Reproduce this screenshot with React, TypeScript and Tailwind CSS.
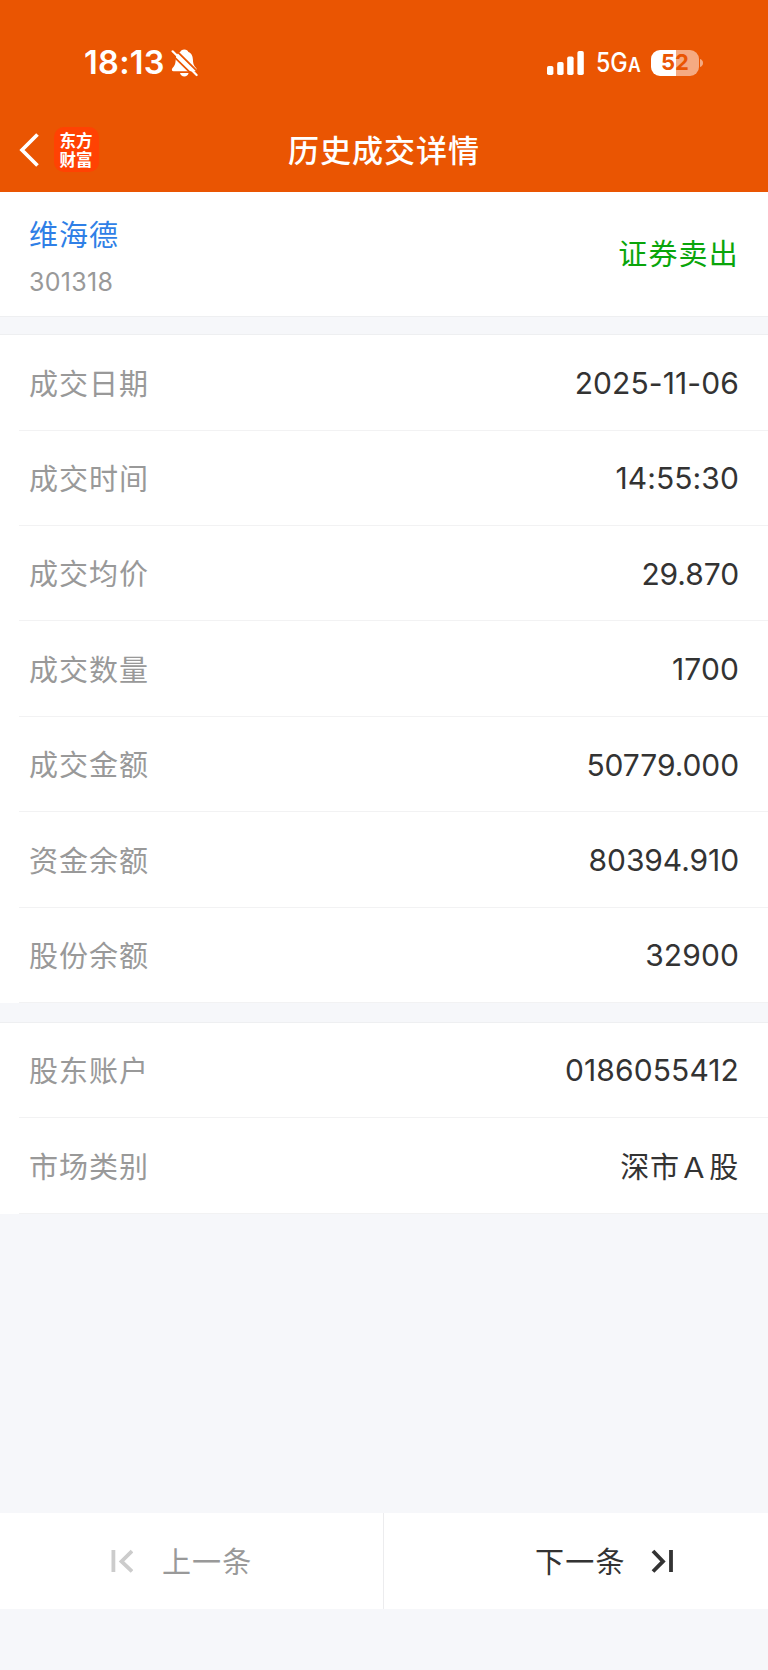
import React from "react";

const LATIN = "font-['Inter','Noto_Sans_CJK_SC',sans-serif]";
const HAN = "font-['Noto_Sans_CJK_SC',sans-serif]";

type Row = { label: string; value: string; han?: boolean };

const tradeRows: Row[] = [
  { label: "成交日期", value: "2025-11-06" },
  { label: "成交时间", value: "14:55:30" },
  { label: "成交均价", value: "29.870" },
  { label: "成交数量", value: "1700" },
  { label: "成交金额", value: "50779.000" },
  { label: "资金余额", value: "80394.910" },
  { label: "股份余额", value: "32900" },
];

const accountRows: Row[] = [
  { label: "股东账户", value: "0186055412" },
  { label: "市场类别", value: "深市Ａ股", han: true },
];

function BellSlash() {
  return (
    <svg className="ml-[5px] h-[28px] w-[27px]" viewBox="0 0 27 28">
      <path
        d="M13.300 .5c-2.200 0-3.600 1.100-4.100 2.400C5.900 4.200 4.900 7 4.700 10.500c-.2 4.300-.9 6-3 8.300C.3 20.300.6 22.300 2.600 22.300H24c2 0 2.300-2 .9-3.500-2.100-2.300-2.800-4-3-8.300-.2-3.500-1.200-6.300-4.500-7.600C16.900 1.600 15.500.5 13.300.5z"
        fill="#fff"
      />
      <path d="M9 24h8.600c-.5 2.100-2.100 3.400-4.300 3.400S9.500 26.100 9 24z" fill="#fff" />
      <path d="M-.5 4.300 24.500 28.800M3.500 -.2 28 24" stroke="#ea5502" strokeWidth="1.800" />
      <path d="M1.600 2.300 25.600 26" stroke="#fff" strokeWidth="2.200" strokeLinecap="round" />
    </svg>
  );
}

function Battery() {
  return (
    <div className="ml-[11px] flex items-center">
      <div className="flex h-[26px] w-[48px] items-center justify-center rounded-[9px] bg-[linear-gradient(90deg,#fff_25px,#f5aa82_25px)]">
        <span className="-mt-px font-['Inter',sans-serif] text-[22px] leading-[26px] font-bold text-[#ea5502]">52</span>
      </div>
      <svg className="ml-[1px] h-[8px] w-[3px]" viewBox="0 0 3 8">
        <path d="M0 0c1.800.6 3 2 3 4S1.800 7.400 0 8z" fill="#f5aa82" />
      </svg>
    </div>
  );
}

function StatusBar() {
  return (
    <div className="flex h-[125px] items-center pl-[84px] text-white">
      <span className="w-[82px] pt-px font-['Inter',sans-serif] text-[32.500px] font-semibold tracking-[0.3px] whitespace-nowrap">18:13</span>
      <BellSlash />
      <div className="ml-auto flex items-center pr-[65px]">
        <svg className="h-[24px] w-[37px]" viewBox="0 0 37 24" fill="#fff">
          <rect x="0" y="15" width="6.400" height="9" rx="1.800" />
          <rect x="10.200" y="11" width="6.400" height="13" rx="1.800" />
          <rect x="20.200" y="5.500" width="6.400" height="18.500" rx="1.800" />
          <rect x="30.400" y="0" width="6.400" height="24" rx="1.800" />
        </svg>
        <span className="ml-[12px] flex w-[44px] items-baseline pt-[2px] font-['Inter',sans-serif] font-medium whitespace-nowrap">
          <span className="inline-block origin-left scale-x-[0.860] text-[27px]">5G</span>
          <span className="-ml-[5px] inline-block origin-left scale-x-[0.900] text-[19.500px] font-semibold">A</span>
        </span>
        <Battery />
      </div>
    </div>
  );
}

function TitleBar() {
  return (
    <div className="grid h-[67px] grid-cols-[1fr_auto_1fr] items-start">
      <div className="flex items-center pl-[19px] pt-[2px]">
        <svg className="h-[34px] w-[20px]" viewBox="0 0 20 34">
          <path d="M18.500 1.500 3 17l15.500 15.500" fill="none" stroke="#fff" strokeWidth="3.700" />
        </svg>
        <div className="ml-[15px] flex h-[45px] w-[45px] items-center justify-center rounded-[10px] bg-[#ff4203]">
          <span className={`${HAN} w-[34px] text-[16.500px] leading-[19px] font-bold break-all text-white`}>东方财富</span>
        </div>
      </div>
      <h1 className={`${HAN} pt-px text-[31px] leading-[46px] font-medium tracking-[1px] text-white`}>历史成交详情</h1>
      <div />
    </div>
  );
}

function DetailList({ rows }: { rows: Row[] }) {
  return (
    <div className="bg-white pl-[19px]">
      {rows.map((row) => (
        <div key={row.label} className="flex h-[95.430px] items-center justify-between border-b border-[#f2f2f3] pr-[29px] pl-[10px]">
          <span className={`${HAN} text-[29px] tracking-[1px] text-[#999]`}>{row.label}</span>
          {row.han ? (
            <span className={`${HAN} text-[29px] tracking-[0.700px] text-[#333]`}>{row.value}</span>
          ) : (
            <span className={`${LATIN} pt-[2px] text-[30px] ${row.value.includes(".") ? "tracking-[-0.080px]" : "tracking-[0.100px]"} text-[#333]`}>{row.value}</span>
          )}
        </div>
      ))}
    </div>
  );
}

export default function App() {
  return (
    <div className="flex h-[1670px] w-[768px] flex-col overflow-hidden bg-[#f6f7fa]">
      <header className="h-[192px] shrink-0 bg-[#ea5502]">
        <StatusBar />
        <TitleBar />
      </header>

      <section className="flex h-[124px] shrink-0 items-center justify-between bg-white pr-[29px] pl-[29px]">
        <div className="flex flex-col pt-[2px]">
          <span className={`${HAN} text-[29px] leading-[44px] tracking-[1px] text-[#2f7fe6]`}>维海德</span>
          <span className={`${LATIN} mt-[9px] text-[25px] leading-[36px] tracking-[0.300px] text-[#999]`}>301318</span>
        </div>
        <span className={`${HAN} pb-[3px] text-[29px] tracking-[1.200px] text-[#0aa50a]`}>证券卖出</span>
      </section>

      <div className="h-[19.200px] shrink-0 border-y border-[#eeeff1]" />
      <DetailList rows={tradeRows} />
      <div className="h-[19.600px] shrink-0 border-b border-[#eeeff1]" />
      <DetailList rows={accountRows} />

      <footer className={`${HAN} mt-auto mb-[61px] flex h-[96px] shrink-0 bg-white text-[29px] tracking-[1px]`}>
        <button className="flex w-[384px] items-center border-r border-[#ececee] pl-[110px] text-[#999]">
          <svg className="h-[24px] w-[23px]" viewBox="0 0 23 24" fill="none" stroke="#ccc" strokeWidth="3.800">
            <path d="M3.400 1v22M22 2 11.500 12.400 22 22.500" />
          </svg>
          <span className="ml-[29px] tracking-[1.100px]">上一条</span>
        </button>
        <button className="flex flex-1 items-center pl-[151px] text-[#333]">
          <span className="tracking-[1.200px]">下一条</span>
          <svg className="ml-[25px] h-[24px] w-[23px]" viewBox="0 0 23 24" fill="none" stroke="#333" strokeWidth="3.800">
            <path d="M20 1v22M2 2 12 12.400 2 22.500" />
          </svg>
        </button>
      </footer>
    </div>
  );
}
